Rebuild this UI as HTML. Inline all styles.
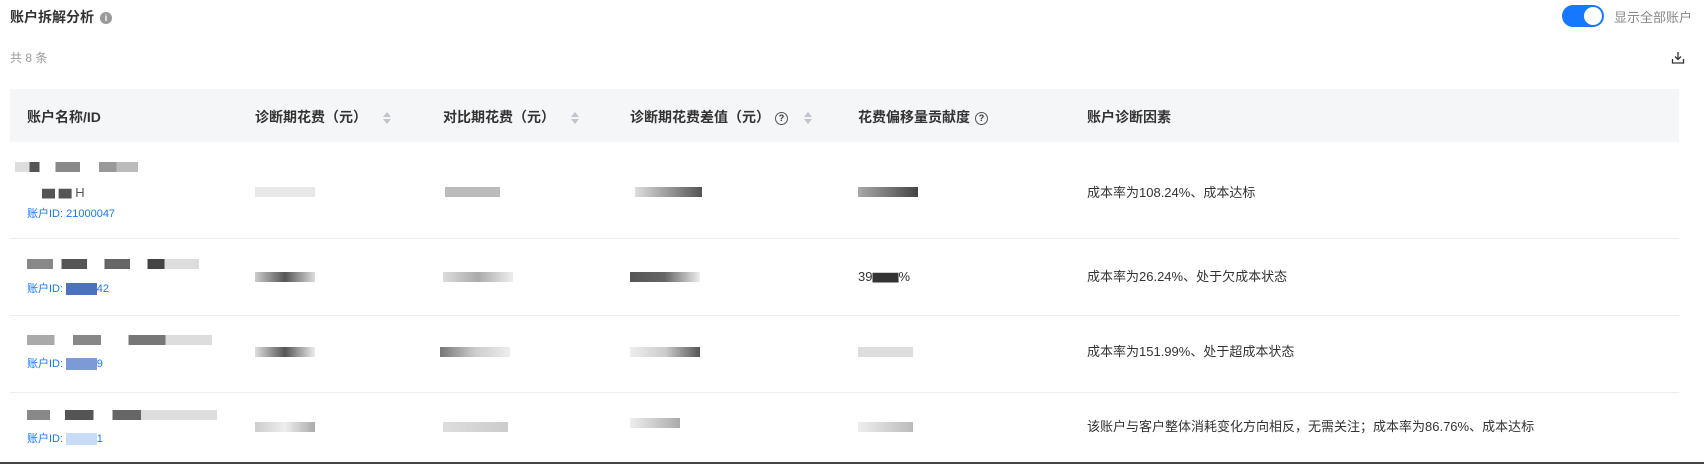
<!DOCTYPE html>
<html><head><meta charset="utf-8"><style>
*{margin:0;padding:0;box-sizing:border-box}
body{width:1704px;height:464px;background:#fff;font-family:"Liberation Sans","Noto Sans CJK SC",sans-serif;color:#333;position:relative;overflow:hidden}
.a{position:absolute;white-space:nowrap}
.title{left:10px;top:7px;font-size:14px;font-weight:bold;color:#333}
.info{display:inline-block;width:12px;height:12px;border-radius:50%;background:#999;color:#fff;font-size:9px;text-align:center;line-height:12px;vertical-align:1px;margin-left:6px;font-weight:bold}
.cnt{left:10px;top:49px;font-size:12px;color:#999}
.tog{left:1562px;top:5px;width:42px;height:22px;border-radius:11px;background:#1677ff}
.tog::after{content:"";position:absolute;right:2px;top:2px;width:18px;height:18px;border-radius:50%;background:#fff}
.togt{left:1614px;top:7px;font-size:13px;color:#888}
.thead{left:10px;top:89px;width:1669px;height:53px;background:#f5f6f8}
.th{top:107px;font-size:14px;font-weight:bold;color:#333}
.sort{display:inline-block;margin-left:16px;vertical-align:middle;width:8px;height:12px;position:relative}
.sort::before{content:"";position:absolute;left:0;top:0;border:4px solid transparent;border-bottom:5px solid #c0c4cc;border-top:0}
.sort::after{content:"";position:absolute;left:0;bottom:0;border:4px solid transparent;border-top:5px solid #c0c4cc;border-bottom:0}
.q{display:inline-block;width:13px;height:13px;border:1.3px solid #555;border-radius:50%;font-size:9px;line-height:10px;text-align:center;vertical-align:1px;margin-left:5px}
.line{left:10px;width:1669px;height:1px;background:#ebedf0}
.td{font-size:13px;color:#333}
.id{font-size:11px;color:#1677ff}
.b{position:absolute;height:10px}
</style></head><body>
<div class="a title">账户拆解分析<span class="info">i</span></div>
<div class="a cnt">共 8 条</div>
<div class="a tog"></div>
<div class="a togt">显示全部账户</div>
<svg class="a" style="left:1671px;top:51px" width="14" height="14" viewBox="0 0 14 14" fill="none" stroke="#333" stroke-width="1.3"><path d="M7 1v7M4 5.5l3 3 3-3M1.5 8v4h11V8"/></svg>
<div class="a thead"></div>
<div class="a th" style="left:27px">账户名称/ID</div>
<div class="a th" style="left:255px">诊断期花费（元）<span class="sort"></span></div>
<div class="a th" style="left:443px">对比期花费（元）<span class="sort"></span></div>
<div class="a th" style="left:630px">诊断期花费差值（元）<span class="q">?</span><span class="sort"></span></div>
<div class="a th" style="left:858px">花费偏移量贡献度<span class="q">?</span></div>
<div class="a th" style="left:1087px">账户诊断因素</div>
<div class="a line" style="top:238px"></div>
<div class="a line" style="top:315px"></div>
<div class="a line" style="top:392px"></div>
<div class="a" style="left:0;top:462px;width:1704px;height:2px;background:#444"></div>

<div class="b" style="left:15px;top:162px;width:145px;background:linear-gradient(90deg,#ddd 0 10%,#555 10% 17%,#fff 17% 28%,#888 28% 45%,#fff 45% 58%,#999 58% 70%,#bbb 70% 85%,#fff 85%)"></div>
<div class="a td" style="left:42px;top:182px;color:#555">▆ ▆ H</div>
<div class="a id" style="left:27px;top:205px">账户ID: 21000047</div>
<div class="b" style="left:255px;top:187px;width:60px;background:#e8e8e8"></div>
<div class="b" style="left:445px;top:187px;width:55px;background:#bbb"></div>
<div class="b" style="left:635px;top:187px;width:67px;background:linear-gradient(90deg,#ddd,#555)"></div>
<div class="b" style="left:858px;top:187px;width:60px;background:linear-gradient(90deg,#aaa,#444)"></div>
<div class="a td" style="left:1087px;top:182px">成本率为108.24%、成本达标</div>

<div class="b" style="left:27px;top:259px;width:172px;background:linear-gradient(90deg,#888 0 15%,#fff 15% 20%,#555 20% 35%,#fff 35% 45%,#666 45% 60%,#fff 60% 70%,#444 70% 80%,#ddd 80%)"></div>
<div class="a id" style="left:27px;top:280px">账户ID: <span style="background:#4a72c0;color:#4a72c0">00000</span>42</div>
<div class="b" style="left:255px;top:272px;width:60px;background:linear-gradient(90deg,#ccc,#555,#ddd)"></div>
<div class="b" style="left:443px;top:272px;width:70px;background:linear-gradient(90deg,#ddd,#aaa,#eee)"></div>
<div class="b" style="left:630px;top:272px;width:70px;background:linear-gradient(90deg,#555,#666,#eee)"></div>
<div class="a td" style="left:858px;top:266px">39▆▆%</div>
<div class="a td" style="left:1087px;top:266px">成本率为26.24%、处于欠成本状态</div>

<div class="b" style="left:27px;top:335px;width:185px;background:linear-gradient(90deg,#aaa 0 15%,#fff 15% 25%,#888 25% 40%,#fff 40% 55%,#777 55% 75%,#ddd 75%)"></div>
<div class="a id" style="left:27px;top:355px">账户ID: <span style="background:#7b9ad6;color:#7b9ad6">00000</span>9</div>
<div class="b" style="left:255px;top:347px;width:60px;background:linear-gradient(90deg,#ddd,#555,#eee)"></div>
<div class="b" style="left:440px;top:347px;width:70px;background:linear-gradient(90deg,#777,#ccc,#eee)"></div>
<div class="b" style="left:630px;top:347px;width:70px;background:linear-gradient(90deg,#eee,#ccc,#555)"></div>
<div class="b" style="left:858px;top:347px;width:55px;background:#ddd"></div>
<div class="a td" style="left:1087px;top:341px">成本率为151.99%、处于超成本状态</div>

<div class="b" style="left:27px;top:410px;width:190px;background:linear-gradient(90deg,#888 0 12%,#fff 12% 20%,#555 20% 35%,#fff 35% 45%,#666 45% 60%,#ddd 60%)"></div>
<div class="a id" style="left:27px;top:430px">账户ID: <span style="background:#c8dcf8;color:#c8dcf8">00000</span>1</div>
<div class="b" style="left:255px;top:422px;width:60px;background:linear-gradient(90deg,#ccc,#eee,#aaa)"></div>
<div class="b" style="left:443px;top:422px;width:65px;background:linear-gradient(90deg,#ddd,#ccc)"></div>
<div class="b" style="left:630px;top:418px;width:50px;background:linear-gradient(90deg,#eee,#ccc,#aaa)"></div>
<div class="b" style="left:858px;top:422px;width:55px;background:linear-gradient(90deg,#eee,#bbb)"></div>
<div class="a td" style="left:1087px;top:416px">该账户与客户整体消耗变化方向相反，无需关注；成本率为86.76%、成本达标</div>
</body></html>
